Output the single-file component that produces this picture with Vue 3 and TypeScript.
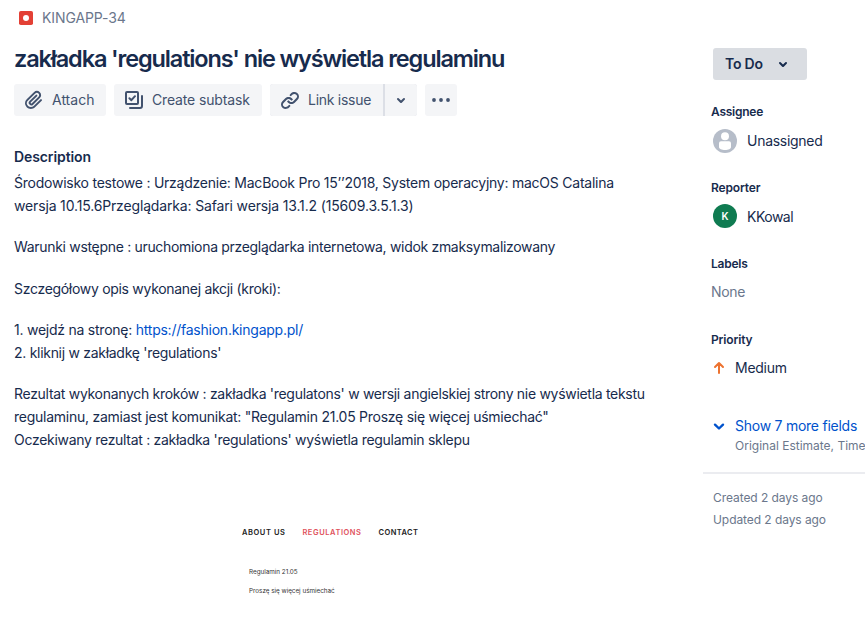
<script setup lang="ts">
interface Line {
  text: string
  cls: string
  link?: string
}

const paragraphs: Line[][] = [
  [
    { text: 'Środowisko testowe : Urządzenie: MacBook Pro 15’’2018, System operacyjny: macOS Catalina', cls: 'l1' },
    { text: 'wersja 10.15.6Przeglądarka: Safari wersja 13.1.2 (15609.3.5.1.3)', cls: 'l2' },
  ],
  [{ text: 'Warunki wstępne : uruchomiona przeglądarka internetowa, widok zmaksymalizowany', cls: 'l3' }],
  [{ text: 'Szczegółowy opis wykonanej akcji (kroki):', cls: 'l4' }],
  [
    { text: '1. wejdź na stronę: ', cls: 'l5', link: 'https://fashion.kingapp.pl/' },
    { text: "2. kliknij w zakładkę 'regulations'", cls: 'l6' },
  ],
  [
    { text: "Rezultat wykonanych kroków : zakładka 'regulatons' w wersji angielskiej strony nie wyświetla tekstu", cls: 'l7' },
    { text: 'regulaminu, zamiast jest komunikat: "Regulamin 21.05 Proszę się więcej uśmiechać"', cls: 'l8' },
    { text: "Oczekiwany rezultat : zakładka 'regulations' wyświetla regulamin sklepu", cls: 'l9' },
  ],
]
</script>

<template>
  <div class="page">
    <main class="main">
      <div class="crumb">
        <svg class="bug" width="14" height="14" viewBox="0 0 14 14">
          <rect width="14" height="14" rx="1.8" fill="#e34035" />
          <circle cx="7" cy="7" r="3" fill="#fff" />
        </svg>
        <span class="key">KINGAPP-34</span>
      </div>
      <h1 class="title">zakładka 'regulations' nie wyświetla regulaminu</h1>

      <div class="toolbar">
        <button class="btn attach">
          <svg width="24" height="24" viewBox="0 0 24 24">
            <path fill="currentColor" d="M11.643 17.965c-1.53 1.495-4.016 1.496-5.542.004a3.773 3.773 0 01.002-5.412l7.147-6.985a2.316 2.316 0 013.233-.003c.893.873.895 2.282.004 3.153l-6.703 6.55a.653.653 0 01-.914-.008.62.62 0 010-.902l6.229-6.087a.941.941 0 000-1.353.995.995 0 00-1.384 0l-6.23 6.087a2.502 2.502 0 000 3.607 2.643 2.643 0 003.683.009l6.703-6.55a4.074 4.074 0 00-.003-5.859 4.306 4.306 0 00-6.002.003l-7.148 6.985a5.655 5.655 0 00-.001 8.118c2.29 2.237 6.015 2.238 8.308-.001l6.682-6.53a.941.941 0 000-1.353.995.995 0 00-1.384 0l-6.68 6.527z" />
          </svg>
          <span>Attach</span>
        </button>
        <button class="btn subtask">
          <svg width="24" height="24" viewBox="0 0 24 24" fill="none" stroke="currentColor" stroke-width="2" stroke-linecap="round" stroke-linejoin="round">
            <rect x="4" y="4" width="12" height="12" rx="1" />
            <path d="M7.4 10.2l2 2 3.6-4M20 8v10a2 2 0 0 1-2 2H8" />
          </svg>
          <span>Create subtask</span>
        </button>
        <div class="split">
          <button class="btn link">
            <svg width="24" height="24" viewBox="0 0 24 24">
              <path fill="currentColor" d="M12.856 5.457l-.937.92a1.002 1.002 0 000 1.437 1.047 1.047 0 001.463 0l.984-.966c.967-.95 2.542-1.135 3.602-.288a2.54 2.54 0 01.203 3.81l-2.903 2.852a2.646 2.646 0 01-3.696 0l-1.11-1.09L9 13.57l1.108 1.089c1.822 1.788 4.802 1.788 6.622 0l2.905-2.852a4.558 4.558 0 00-.357-6.82c-1.893-1.517-4.695-1.226-6.422.47M11.144 19.543l.937-.92a1.002 1.002 0 000-1.437 1.047 1.047 0 00-1.462 0l-.985.966c-.967.95-2.542 1.135-3.602.288a2.54 2.54 0 01-.203-3.81l2.903-2.852a2.646 2.646 0 013.696 0l1.11 1.09L15 11.43l-1.108-1.089c-1.822-1.788-4.802-1.788-6.622 0l-2.905 2.852a4.558 4.558 0 00.357 6.82c1.893 1.517 4.695 1.226 6.422-.47" />
            </svg>
            <span>Link issue</span>
          </button>
          <button class="btn caret">
            <svg width="24" height="24" viewBox="0 0 24 24">
              <path fill="currentColor" d="M8.292 10.293a1.009 1.009 0 000 1.419l2.939 2.965c.218.215.5.322.779.322s.556-.107.769-.322l2.93-2.955a1.01 1.01 0 000-1.419.987.987 0 00-1.406 0l-2.298 2.317-2.307-2.327a.99.99 0 00-1.406 0z" />
            </svg>
          </button>
        </div>
        <button class="btn more">
          <svg width="24" height="24" viewBox="0 0 24 24" fill="currentColor">
            <circle cx="5" cy="12" r="1.9" />
            <circle cx="12" cy="12" r="1.9" />
            <circle cx="19" cy="12" r="1.9" />
          </svg>
        </button>
      </div>

      <h2 class="heading">Description</h2>
      <div class="body">
        <p v-for="(lines, i) in paragraphs" :key="i">
          <span v-for="line in lines" :key="line.cls" class="line" :class="line.cls">{{ line.text }}<a v-if="line.link" class="url">{{ line.link }}</a></span>
        </p>
      </div>

      <div class="shot">
        <nav class="shot-nav">
          <span class="about">ABOUT US</span>
          <span class="regs">REGULATIONS</span>
          <span class="contact">CONTACT</span>
        </nav>
        <div class="shot-text s1">Regulamin 21.05</div>
        <div class="shot-text s2">Proszę się więcej uśmiechać</div>
      </div>
    </main>

    <aside class="side">
      <button class="status">
        <span>To Do</span>
        <svg width="24" height="24" viewBox="0 0 24 24">
          <path fill="currentColor" d="M8.292 10.293a1.009 1.009 0 000 1.419l2.939 2.965c.218.215.5.322.779.322s.556-.107.769-.322l2.93-2.955a1.01 1.01 0 000-1.419.987.987 0 00-1.406 0l-2.298 2.317-2.307-2.327a.99.99 0 00-1.406 0z" />
        </svg>
      </button>

      <section class="field">
        <h3 class="assignee">Assignee</h3>
        <div class="value">
          <svg class="avatar" width="24" height="24" viewBox="0 0 24 24">
            <circle cx="12" cy="12" r="12" fill="#b6bdc9" />
            <circle cx="12" cy="7.2" r="4" fill="#fff" />
            <path fill="#fff" d="M6 14.2a2 2 0 0 1 2-2h8a2 2 0 0 1 2 2V18c0 2-2.6 3-6 3s-6-1-6-3z" />
          </svg>
          <span class="unassigned">Unassigned</span>
        </div>
      </section>
      <section class="field">
        <h3 class="reporter">Reporter</h3>
        <div class="value">
          <span class="avatar initial">K</span>
          <span class="kkowal">KKowal</span>
        </div>
      </section>
      <section class="field">
        <h3 class="labels">Labels</h3>
        <div class="value none"><span>None</span></div>
      </section>
      <section class="field">
        <h3 class="prio">Priority</h3>
        <div class="value priority">
          <svg width="16" height="16" viewBox="0 0 16 16" fill="none" stroke="#ed7330" stroke-width="2" stroke-linecap="round" stroke-linejoin="round">
            <path d="M8 13V3.2M4 7l4-4 4 4" />
          </svg>
          <span class="medium">Medium</span>
        </div>
      </section>

      <div class="expand">
        <svg width="24" height="24" viewBox="0 0 24 24" fill="none" stroke="#0052cc" stroke-width="2.4" stroke-linecap="round" stroke-linejoin="round">
          <path d="M8 10.7l4 3.8 4-3.8" />
        </svg>
        <div class="expand-text">
          <div class="show">Show 7 more fields</div>
          <div class="summary">Original Estimate, Time</div>
        </div>
      </div>
      <div class="dates">
        <div class="created">Created 2 days ago</div>
        <div class="updated">Updated 2 days ago</div>
      </div>
    </aside>
  </div>
</template>

<style>
body {
  background: #fff;
}
</style>

<style scoped>
.page {
  display: flex;
  width: 865px;
  height: 619px;
  overflow: hidden;
  background: #fff;
  color: #172b4d;
  font-family: Inter, "Liberation Sans", sans-serif;
  font-size: 14px;
  white-space: nowrap;
}
h1, h2, h3, p { margin: 0; }
button {
  border: 0;
  padding: 0;
  font: inherit;
  color: inherit;
}
svg { flex: none; display: block; }
.main {
  width: 689px;
  padding-left: 14px;
}
.crumb {
  display: flex;
  align-items: center;
  height: 20px;
  padding: 8px 0 0 5px;
  gap: 9px;
  color: #6b778c;
}
.key {
  padding-bottom: 1px;
  letter-spacing: -0.1px;
}
.title {
  height: 28px;
  margin-top: 17px;
  font-size: 23.5px;
  line-height: 28px;
  font-weight: 600;
  letter-spacing: -1.14px;
}
.toolbar {
  display: flex;
  gap: 8px;
  margin-top: 11px;
}
.btn {
  display: flex;
  align-items: center;
  box-sizing: border-box;
  height: 32px;
  border-radius: 3px;
  background: #f4f5f7;
  color: #42526e;
}
.btn span { padding-bottom: 1px; }
.attach { width: 92px; padding-left: 8px; gap: 6px; }
.subtask { width: 148px; padding-left: 8px; gap: 6px; letter-spacing: -0.15px; }
.split { display: flex; gap: 2px; background: #dcdfe6; border-radius: 3px; }
.link { width: 113px; padding-left: 8px; gap: 6px; border-radius: 3px 0 0 3px; letter-spacing: -0.28px; }
.caret { width: 32px; justify-content: center; border-radius: 0 3px 3px 0; }
.more { width: 32px; justify-content: center; }
.heading {
  margin-top: 31px;
  font-size: 14px;
  line-height: 20px;
  font-weight: 600;
  letter-spacing: -0.1px;
}
.body {
  display: flex;
  flex-direction: column;
  gap: 18.3px;
  margin-top: 4px;
  line-height: 23px;
}
.line { display: block; }
.l1 { letter-spacing: -0.24px; }
.l2 { letter-spacing: -0.156px; }
.l3 { letter-spacing: -0.315px; }
.l4 { letter-spacing: -0.3px; }
.l5 { letter-spacing: -0.24px; }
.l6 { letter-spacing: -0.29px; }
.l7 { letter-spacing: -0.297px; }
.l8 { letter-spacing: -0.257px; }
.l9 { letter-spacing: -0.293px; }
.url { color: #0052cc; }
.shot {
  padding: 76px 0 0 228px;
  color: #222;
}
.shot-nav {
  display: flex;
  gap: 17px;
  height: 12px;
  font-size: 7.5px;
  line-height: 12px;
  font-weight: 600;
  letter-spacing: 0.56px;
}
.regs { color: #e0525c; }
.contact { letter-spacing: 0.4px; }
.shot-text {
  padding-left: 7px;
  font-size: 6.3px;
  line-height: 12px;
  color: #333;
}
.s1 { margin-top: 27px; }
.s2 { margin-top: 7px; }

.side {
  width: 162px;
  display: flex;
  flex-direction: column;
}
.status {
  display: flex;
  align-items: center;
  flex: none;
  width: 94px;
  height: 32px;
  margin: 48px 0 24px 10px;
  padding-left: 12px;
  gap: 8px;
  border-radius: 3px;
  background: #dadde2;
  font-weight: 600;
  letter-spacing: -0.2px;
}
.status span { padding-bottom: 1px; }
.field {
  height: 76px;
  flex: none;
  padding-left: 8px;
}
.field h3 {
  font-size: 12px;
  line-height: 16px;
  font-weight: 600;
}
.assignee, .labels { letter-spacing: -0.25px; }
.reporter, .prio { letter-spacing: -0.15px; }
.value {
  display: flex;
  align-items: center;
  height: 24px;
  margin-top: 9px;
  padding-left: 2px;
  gap: 10px;
}
.field:nth-of-type(2) .value { margin-top: 8px; }
.unassigned { padding-bottom: 1px; letter-spacing: -0.28px; }
.kkowal { letter-spacing: -0.5px; }
.medium { letter-spacing: -0.27px; padding-bottom: 2px; }
.initial {
  width: 24px;
  height: 24px;
  border-radius: 50%;
  background: #0f7b51;
  color: #fff;
  font-size: 10px;
  line-height: 24px;
  font-weight: 600;
  text-align: center;
}
.none { height: 20px; padding-left: 0; color: #6b778c; letter-spacing: -0.3px; }
.priority { height: 22px; padding-left: 0; gap: 8px; }
.expand {
  display: flex;
  margin-top: 7px;
  padding-left: 4px;
  gap: 4px;
}
.expand-text { line-height: 20px; margin-top: 1px; }
.expand svg { margin-top: -1px; }
.show { color: #0052cc; letter-spacing: -0.25px; }
.summary { font-size: 12px; color: #6b778c; }
.dates {
  margin-top: 16px;
  padding: 13px 0 0 10px;
  border-top: 2px solid #ebecf0;
  font-size: 12px;
  line-height: 22px;
  letter-spacing: -0.07px;
  color: #6b778c;
}
</style>
